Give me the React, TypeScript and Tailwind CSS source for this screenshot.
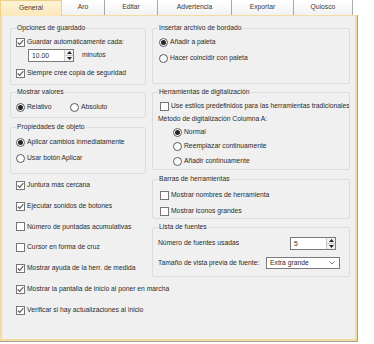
import React from "react";

function CheckBox({ checked }: { checked?: boolean }) {
  return (
    <span className="w-[9px] h-[9px] shrink-0 border border-[#767676] bg-white flex items-center justify-center">
      {checked && (
        <svg width="7" height="7" viewBox="0 0 7 7">
          <path d="M0.8 3.5 L2.7 5.4 L6.3 1.2" fill="none" stroke="#5a5a5a" strokeWidth="1.1" />
        </svg>
      )}
    </span>
  );
}

function Radio({ checked }: { checked?: boolean }) {
  return (
    <span className="w-[9px] h-[9px] shrink-0 rounded-full border border-[#5a5a5a] bg-white flex items-center justify-center">
      {checked && <span className="w-[5px] h-[5px] rounded-full bg-[#252525]" />}
    </span>
  );
}

function Check({ label, checked, className = "" }: { label: string; checked?: boolean; className?: string }) {
  return (
    <div className={`flex items-center gap-[2px] h-[12px] whitespace-nowrap ${className}`}>
      <CheckBox checked={checked} />
      <span>{label}</span>
    </div>
  );
}

function Option({ label, checked, className = "" }: { label: string; checked?: boolean; className?: string }) {
  return (
    <div className={`flex items-center gap-[2px] h-[12px] whitespace-nowrap ${className}`}>
      <Radio checked={checked} />
      <span>{label}</span>
    </div>
  );
}

function Group({ title, className = "", children }: { title: string; className?: string; children: React.ReactNode }) {
  return (
    <fieldset className={`border border-[#dcdcdc] rounded-[2px] px-[5px] min-w-0 ${className}`}>
      <legend className="px-[1px] leading-[8px]">{title}</legend>
      {children}
    </fieldset>
  );
}

function Spin({ value, className = "" }: { value: string; className?: string }) {
  return (
    <div className={`flex h-[13px] bg-white border border-[#7a7a7a] ${className}`}>
      <span className="flex-1 pl-[3px] leading-[11px]">{value}</span>
      <div className="w-[9px] flex flex-col border-l border-[#c8c8c8] bg-[#f2f2f2]">
        <div className="flex-1 flex items-center justify-center border-b border-[#c8c8c8]">
          <svg width="5" height="3" viewBox="0 0 5 3">
            <path d="M0 3 L2.5 0 L5 3Z" fill="#222" />
          </svg>
        </div>
        <div className="flex-1 flex items-center justify-center">
          <svg width="5" height="3" viewBox="0 0 5 3">
            <path d="M0 0 L5 0 L2.5 3Z" fill="#222" />
          </svg>
        </div>
      </div>
    </div>
  );
}

const tabs = [
  { label: "General", w: "w-[62px]" },
  { label: "Aro", w: "w-[43px]" },
  { label: "Editar", w: "w-[53px]" },
  { label: "Advertencia", w: "w-[74px]" },
  { label: "Exportar", w: "w-[62px]" },
  { label: "Quiosco", w: "w-[59px]" },
];

export default function App() {
  return (
    <div className="w-[374px] h-[344px] bg-white overflow-hidden font-['Liberation_Sans',Arial,sans-serif] text-[6.75px] text-[#2b2b2b] leading-none">
      {/* Tabs */}
      <div className="flex h-[15px] text-[#3a3a3a]">
        {tabs.map((t, i) =>
          i === 0 ? (
            <div
              key={t.label}
              className={`${t.w} h-[16px] relative z-10 flex items-center justify-center border-x border-t border-[#ebcf85] bg-gradient-to-b from-[#fdf2d6] to-[#fbe8bb]`}
            >
              {t.label}
            </div>
          ) : (
            <div
              key={t.label}
              className={`${t.w} h-[15px] flex items-center justify-center border-r border-[#a9a9a9] bg-gradient-to-b from-white to-[#f2f2f2]`}
            >
              {t.label}
            </div>
          )
        )}
      </div>

      {/* Panel */}
      <div className="w-[358px] h-[327px] border-r border-b border-[#a3a3a3]">
        <div className="h-full border-2 border-t border-[#f3dc9e] bg-[#f0f0f0] pl-[8px] pt-[8px] flex gap-[6px]">
          {/* Left column */}
          <div className="w-[136px] flex flex-col shrink-0">
            <Group title="Opciones de guardado" className="h-[61px] pt-[4px]">
              <Check label="Guardar automáticamente cada:" checked />
              <div className="flex items-center h-[13px] mt-[1px] pl-[12px]">
                <Spin value="10.00" className="w-[46px]" />
                <span className="ml-[8px]">minutos</span>
              </div>
              <Check label="Siempre cree copia de seguridad" checked className="mt-[5px]" />
            </Group>

            <Group title="Mostrar valores" className="h-[30px] mt-[3px] pt-[5px]">
              <div className="flex">
                <Option label="Relativo" checked className="w-[54px]" />
                <Option label="Absoluto" />
              </div>
            </Group>

            <Group title="Propiedades de objeto" className="h-[51px] mt-[5px] pt-[5px]">
              <Option label="Aplicar cambios inmediatamente" checked />
              <Option label="Usar botón Aplicar" className="mt-[4px]" />
            </Group>

            <div className="flex flex-col pl-[6px] mt-[1px]">
              {[
                ["Juntura más cercana", true],
                ["Ejecutar sonidos de botones", true],
                ["Número de puntadas acumulativas", false],
                ["Cursor en forma de cruz", false],
                ["Mostrar ayuda de la herr. de medida", true],
                ["Mostrar la pantalla de inicio al poner en marcha", true],
                ["Verificar si hay actualizaciones al inicio", true],
              ].map(([label, checked]) => (
                <div key={label as string} className="h-[20.8px] flex items-center">
                  <Check label={label as string} checked={checked as boolean} />
                </div>
              ))}
            </div>
          </div>

          {/* Right column */}
          <div className="w-[198px] flex flex-col shrink-0">
            <Group title="Insertar archivo de bordado" className="h-[60px] pt-[4px]">
              <Option label="Añadir a paleta" checked className="ml-[1px]" />
              <Option label="Hacer coincidir con paleta" className="ml-[1px] mt-[4px]" />
            </Group>

            <Group title="Herramientas de digitalización" className="h-[82px] mt-[4px] pt-[4px] overflow-hidden">
              <Check label="Use estilos predefinidos para las herramientas tradicionales" className="ml-[2px]" />
              <div className="h-[12px] flex items-center mt-[1px] whitespace-nowrap">Método de digitalización Columna A:</div>
              <Option label="Normal" checked className="ml-[15px] mt-[1px]" />
              <Option label="Reemplazar continuamente" className="ml-[15px] mt-[2px]" />
              <Option label="Añadir continuamente" className="ml-[15px] mt-[3px]" />
            </Group>

            <Group title="Barras de herramientas" className="h-[44px] mt-[5px] pt-[6px]">
              <Check label="Mostrar nombres de herramienta" className="ml-[2px]" />
              <Check label="Mostrar iconos grandes" className="ml-[2px] mt-[4px]" />
            </Group>

            <Group title="Lista de fuentes" className="h-[54px] mt-[4px] pt-[6px]">
              <div className="h-[12px] flex items-center justify-between">
                <span>Número de fuentes usadas</span>
                <Spin value="5" className="w-[46px] mr-[8px]" />
              </div>
              <div className="h-[12px] mt-[8px] flex items-center justify-between whitespace-nowrap">
                <span>Tamaño de vista previa de fuente:</span>
                <div className="w-[74px] h-[12px] mr-[4px] bg-white border border-[#7a7a7a] flex items-center justify-between pl-[3px] pr-[4px]">
                  <span>Extra grande</span>
                  <svg width="6" height="4" viewBox="0 0 6 4">
                    <path d="M0.5 0.5 L3 3 L5.5 0.5" fill="none" stroke="#555" strokeWidth="0.8" />
                  </svg>
                </div>
              </div>
            </Group>
          </div>
        </div>
      </div>
    </div>
  );
}
